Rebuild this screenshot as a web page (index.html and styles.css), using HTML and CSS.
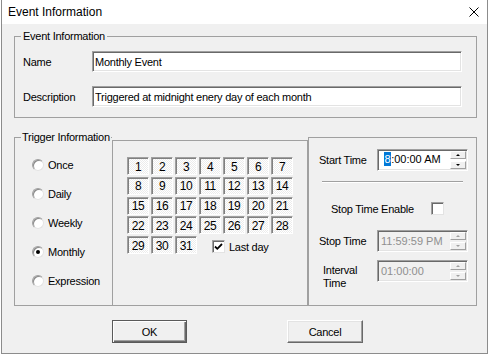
FILE: index.html
```html
<!DOCTYPE html>
<html lang="en">
<head>
    <meta charset="UTF-8">
    <title>Event Information</title>
    <link rel="stylesheet" href="styles.css">
</head>
<body>
    <div class="window">
        <div class="title-bar">
            <span class="title">Event Information</span>
            <svg class="close-icon" width="10" height="10" viewBox="0 0 10 10">
                <path d="M0.5 0.5 L9.5 9.5 M9.5 0.5 L0.5 9.5" stroke="#000" stroke-width="1"/>
            </svg>
        </div>

        <div class="dialog-body">
            <fieldset class="group event-group">
                <legend>Event Information</legend>
                <div class="event-fields">
                    <label for="name">Name</label>
                    <input class="text-input" id="name" type="text" value="Monthly Event">
                    <label for="desc">Description</label>
                    <input class="text-input" id="desc" type="text" value="Triggered at midnight enery day of each month">
                </div>
            </fieldset>

            <div class="trigger-row">
                <fieldset class="group trigger-group">
                    <legend>Trigger Information</legend>
                    <div class="radio-list">
                        <div class="radio-item"><span class="radio"></span>Once</div>
                        <div class="radio-item"><span class="radio"></span>Daily</div>
                        <div class="radio-item"><span class="radio"></span>Weekly</div>
                        <div class="radio-item"><span class="radio checked"></span>Monthly</div>
                        <div class="radio-item"><span class="radio"></span>Expression</div>
                    </div>
                </fieldset>

                <div class="panel day-panel">
                    <div class="day-grid">
                        <div class="day">1</div><div class="day">2</div><div class="day">3</div><div class="day">4</div>
                        <div class="day">5</div><div class="day">6</div><div class="day">7</div>
                        <div class="day">8</div><div class="day">9</div><div class="day">10</div><div class="day">11</div>
                        <div class="day">12</div><div class="day">13</div><div class="day">14</div>
                        <div class="day">15</div><div class="day">16</div><div class="day">17</div><div class="day">18</div>
                        <div class="day">19</div><div class="day">20</div><div class="day">21</div>
                        <div class="day">22</div><div class="day">23</div><div class="day">24</div><div class="day">25</div>
                        <div class="day">26</div><div class="day">27</div><div class="day">28</div>
                        <div class="day">29</div><div class="day">30</div><div class="day">31</div>
                        <div class="last-day">
                            <span class="checkbox">
                                <svg width="11" height="11" viewBox="0 0 11 11">
                                    <path d="M2 5.5 L4.3 7.8 L9 3" fill="none" stroke="#000" stroke-width="1.8"/>
                                </svg>
                            </span>
                            Last day
                        </div>
                    </div>
                </div>

                <div class="panel time-panel">
                    <div class="time-row">
                        <span class="time-label">Start Time</span>
                        <div class="time-box">
                            <span class="time-text start-text"><span class="selected">8</span>:00:00 AM</span>
                            <div class="spinner">
                                <span class="spin up"></span>
                                <span class="spin down"></span>
                            </div>
                        </div>
                    </div>

                    <div class="separator"></div>

                    <div class="enable-row">
                        <span class="enable-label">Stop Time Enable</span>
                        <span class="checkbox"></span>
                    </div>

                    <div class="time-row stop-row">
                        <span class="time-label">Stop Time</span>
                        <div class="time-box disabled">
                            <span class="time-text">11:59:59 PM</span>
                            <div class="spinner">
                                <span class="spin up"></span>
                                <span class="spin down"></span>
                            </div>
                        </div>
                    </div>

                    <div class="time-row interval-row">
                        <span class="time-label two-line">Interval<br>Time</span>
                        <div class="time-box disabled">
                            <span class="time-text">01:00:00</span>
                            <div class="spinner">
                                <span class="spin up"></span>
                                <span class="spin down"></span>
                            </div>
                        </div>
                    </div>
                </div>
            </div>

            <div class="button-row">
                <button class="btn btn-ok" type="button">OK</button>
                <button class="btn btn-cancel" type="button">Cancel</button>
            </div>
        </div>
    </div>
</body>
</html>
```

FILE: styles.css
```css
* {
    margin: 0;
    padding: 0;
    box-sizing: border-box;
}

body {
    font-family: "Liberation Sans", Arial, sans-serif;
    font-size: 11px;
    letter-spacing: -0.25px;
    color: #000;
    background: #fff;
}

.window {
    margin-left: 1px;
    width: 487px;
    height: 354px;
    border: 1px solid #8c8c8c;
    border-top: none;
    background: #f0f0f0;
}

.title-bar {
    height: 24px;
    background: #fff;
    display: flex;
    align-items: center;
    justify-content: space-between;
    padding: 0 8px 0 6px;
    font-size: 12px;
    letter-spacing: 0;
}

.close-icon {
    display: block;
    margin-top: -1px;
}

.dialog-body {
    padding: 6px 0 0 12px;
}

/* group boxes */
.group {
    border: 1px solid #a0a0a0;
    min-width: 0;
}

.group legend {
    margin-left: 6px;
    padding: 0 2px;
    line-height: 13px;
    white-space: nowrap;
}

.event-group {
    width: 463px;
    height: 88px;
}

.event-fields {
    display: grid;
    grid-template-columns: 69px 370px;
    grid-auto-rows: 21px;
    row-gap: 14px;
    align-items: center;
    padding: 8px 0 0 8px;
}

.text-input {
    height: 21px;
    width: 100%;
    font: inherit;
    letter-spacing: inherit;
    color: #000;
    background: #fff;
    border: 1px solid;
    border-color: #a0a0a0 #fff #fff #a0a0a0;
    box-shadow: inset 1px 1px 0 #696969, inset -1px -1px 0 #e3e3e3;
    padding: 0 0 0 2px;
    outline: none;
}

.trigger-row {
    display: flex;
    align-items: flex-end;
    margin-top: 13px;
    height: 175px;
}

.trigger-group {
    width: 98px;
    height: 175px;
    border-right: none;
}

.trigger-group legend {
    padding: 0 1px;
    margin-left: 6px;
}

.radio-list {
    padding: 6px 0 0 17px;
}

.radio-item {
    height: 29px;
    display: flex;
    align-items: center;
}

.radio {
    width: 12px;
    height: 12px;
    margin-right: 4px;
    border-radius: 50%;
    background: #fff;
    border: 1px solid;
    border-color: #a0a0a0 #e3e3e3 #e3e3e3 #a0a0a0;
    box-shadow: inset 1px 1px 0 #8a8a8a;
    display: flex;
    align-items: center;
    justify-content: center;
}

.radio.checked::after {
    content: "";
    width: 4px;
    height: 4px;
    border-radius: 50%;
    background: #000;
}

.panel {
    border: 1px solid #a0a0a0;
}

.day-panel {
    width: 196px;
    height: 166px;
    padding: 16px 0 0 14px;
}

.day-grid {
    display: grid;
    grid-template-columns: repeat(7, 22px);
    grid-auto-rows: 18px;
    column-gap: 2px;
    row-gap: 1.75px;
}

.day {
    display: flex;
    align-items: center;
    justify-content: center;
    border: 1px solid;
    border-color: #a0a0a0 #fff #fff #a0a0a0;
    box-shadow: inset 1px 1px 0 #808080;
    background: repeating-conic-gradient(#fff 0 25%, #ececec 0 50%) 0 0 / 2px 2px;
    padding-top: 1px;
    font-size: 12px;
    letter-spacing: -0.5px;
}

.last-day {
    grid-column: 4 / span 4;
    display: flex;
    align-items: center;
    padding: 3px 0 0 13px;
}

.checkbox {
    width: 13px;
    height: 13px;
    margin-right: 4px;
    background: #fff;
    border: 1px solid;
    border-color: #a0a0a0 #e3e3e3 #e3e3e3 #a0a0a0;
    box-shadow: inset 1px 1px 0 #696969;
    display: flex;
    align-items: center;
    justify-content: center;
}

.checkbox svg {
    display: block;
}

.time-panel {
    width: 169px;
    height: 169px;
    padding: 11px 0 0 10px;
}

.time-row {
    display: flex;
    align-items: center;
    height: 22px;
}

.time-label {
    width: 58px;
    flex-shrink: 0;
}

.time-label.two-line {
    line-height: 13px;
    padding: 4px 0 0 4px;
    align-self: flex-start;
}

.time-box {
    width: 91px;
    height: 22px;
    display: flex;
    align-items: center;
    background: #fff;
    border: 1px solid;
    border-color: #a0a0a0 #fff #fff #a0a0a0;
    box-shadow: inset 1px 1px 0 #696969, inset -1px -1px 0 #e3e3e3;
    padding: 1px 1px 1px 0;
}

.time-box.disabled {
    background: #f0f0f0;
    color: #8f8f8f;
}

.time-text {
    flex: 1;
    padding-left: 3px;
    letter-spacing: 0;
    margin-top: -1px;
}

.start-text {
    padding-left: 6px;
    margin-top: -3px;
}

.selected {
    display: inline-block;
    background: #0078d7;
    color: #fff;
    line-height: 14px;
    padding: 0 0.5px;
}

.spinner {
    width: 16px;
    height: 18px;
    display: flex;
    flex-direction: column;
    gap: 2px;
}

.spin {
    flex: 1;
    display: flex;
    align-items: center;
    justify-content: center;
    background: #f0f0f0;
    border: 1px solid;
    border-color: #fff #a0a0a0 #a0a0a0 #fff;
}

.spin.up::after,
.spin.down::after {
    content: "";
    border-left: 2px solid transparent;
    border-right: 2px solid transparent;
}

.spin.up::after {
    border-bottom: 2px solid #000;
}

.spin.down::after {
    border-top: 2px solid #000;
}

.disabled .spin.up::after {
    border-bottom-color: #a0a0a0;
}

.disabled .spin.down::after {
    border-top-color: #a0a0a0;
}

.separator {
    width: 141px;
    margin: 10px 0 0 3px;
    border-top: 1px solid #a0a0a0;
    border-bottom: 1px solid #fff;
}

.enable-row {
    display: flex;
    align-items: center;
    height: 13px;
    margin-top: 19px;
    padding-left: 12px;
}

.enable-label {
    width: 100px;
}

.stop-row {
    margin-top: 15px;
}

.interval-row {
    margin-top: 8px;
}

.button-row {
    display: flex;
    margin-top: 14px;
}

.btn {
    height: 23px;
    font: inherit;
    letter-spacing: inherit;
    color: #000;
    background: #f0f0f0;
    cursor: pointer;
}

.btn-ok {
    width: 75px;
    margin-left: 98px;
    border: 1px solid #5a5a5a;
    box-shadow: inset 1px 1px 0 #fff, inset -1px -1px 0 #696969, inset -2px -2px 0 #a0a0a0;
}

.btn-cancel {
    width: 76px;
    margin-left: 100px;
    border: 1px solid;
    border-color: #fff #696969 #696969 #fff;
    box-shadow: inset -1px -1px 0 #a0a0a0, inset 1px 1px 0 #e3e3e3;
}
```
